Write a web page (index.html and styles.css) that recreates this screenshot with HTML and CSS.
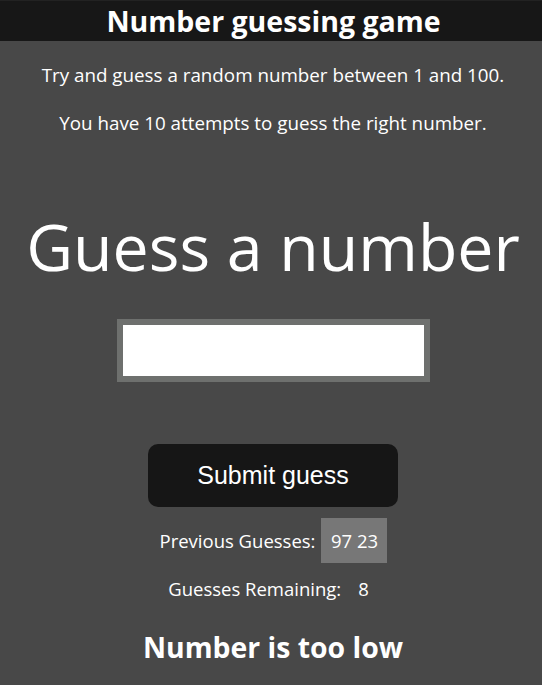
FILE: index.html
```html
<!DOCTYPE html>
<html lang="en">
<head>
<meta charset="utf-8">
<title>Number guessing game</title>
<link rel="stylesheet" href="styles.css">
</head>
<body>
<header class="topbar">
  <h1 class="title">Number guessing game</h1>
</header>
<main class="game">
  <p class="intro intro-first">Try and guess a random number between 1 and 100.</p>
  <p class="intro intro-second">You have 10 attempts to guess the right number.</p>
  <h2 class="prompt">Guess a number</h2>
  <input class="guess-field" type="number" aria-label="Your guess">
  <button class="submit" type="button">Submit guess</button>
  <div class="stat stat-prev">
    <span class="stat-label">Previous Guesses:</span>
    <span class="prev-box">97 23</span>
  </div>
  <div class="stat stat-left">
    <span class="stat-label">Guesses Remaining:</span>
    <span class="left-num">8</span>
  </div>
  <p class="result">Number is too low</p>
</main>
</body>
</html>
```

FILE: styles.css
```css
html, body {
  margin: 0;
  padding: 0;
}
body {
  background: #484848;
  color: #ffffff;
  font-family: "Open Sans", "Noto Sans", sans-serif;
  text-align: center;
}
.topbar {
  background: #171717;
  border-top: 1px solid #222222;
  height: 40px;
  padding-left: 5px;
}
.title {
  margin: 0;
  font-size: 28.5px;
  font-weight: 700;
  line-height: 40px;
}
.game {
  display: flex;
  flex-direction: column;
  align-items: center;
  padding-left: 4px;
}
.intro {
  margin: 0;
  font-size: 18.8px;
  line-height: 24px;
}
.intro-first {
  margin-top: 22px;
}
.intro-second {
  margin-top: 24px;
}
.prompt {
  margin: 74px 0 0;
  font-size: 64.4px;
  font-weight: 400;
  line-height: 74px;
}
.guess-field {
  margin-top: 36px;
  box-sizing: border-box;
  width: 313px;
  height: 63px;
  border: 6px solid #6e706e;
  background: #ffffff;
  outline: none;
  padding: 0 8px;
  font-size: 24px;
}
.submit {
  margin-top: 62px;
  width: 250px;
  height: 63px;
  border: none;
  border-radius: 10px;
  background: #161616;
  color: #ffffff;
  font-family: "Liberation Sans", Arial, sans-serif;
  font-size: 25px;
}
.stat {
  display: flex;
  align-items: center;
  font-size: 18.5px;
  line-height: 24px;
}
.stat-prev {
  margin-top: 11px;
  gap: 6px;
  padding-left: 1px;
}
.prev-box {
  display: flex;
  align-items: center;
  justify-content: center;
  width: 66px;
  height: 45px;
  background: #777777;
}
.stat-left {
  margin-top: 14px;
  gap: 17px;
  padding-right: 9px;
}
.result {
  margin: 28px 0 0;
  font-size: 28.4px;
  font-weight: 700;
  line-height: 36px;
}
```
